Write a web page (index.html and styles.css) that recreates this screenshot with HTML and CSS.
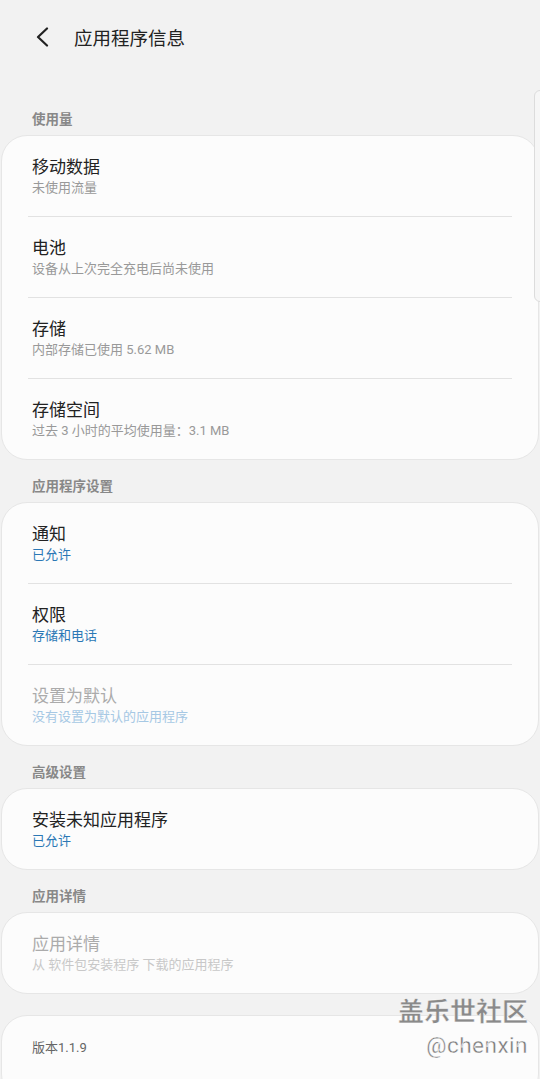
FILE: index.html
```html
<!DOCTYPE html>
<html lang="zh-CN">
<head>
  <meta charset="UTF-8">
  <meta name="viewport" content="width=device-width, initial-scale=1.0">
  <title>应用程序信息</title>
  <link rel="stylesheet" href="styles.css">
</head>
<body>
  <div class="header">
    <svg class="back" width="14" height="20" viewBox="0 0 14 20">
      <path d="M12 1.5 L3 10 L12 18.5" fill="none" stroke="#222" stroke-width="2.2" stroke-linecap="round" stroke-linejoin="round"/>
    </svg>
    <span class="title">应用程序信息</span>
  </div>

  <div class="scrollbar"></div>

  <div class="label first">使用量</div>
  <div class="card">
    <div class="item">
      <div class="name">移动数据</div>
      <div class="sub">未使用流量</div>
    </div>
    <div class="item">
      <div class="name">电池</div>
      <div class="sub">设备从上次完全充电后尚未使用</div>
    </div>
    <div class="item">
      <div class="name">存储</div>
      <div class="sub">内部存储已使用 5.62 MB</div>
    </div>
    <div class="item">
      <div class="name">存储空间</div>
      <div class="sub">过去 3 小时的平均使用量：3.1 MB</div>
    </div>
  </div>

  <div class="label">应用程序设置</div>
  <div class="card">
    <div class="item">
      <div class="name">通知</div>
      <div class="sub blue">已允许</div>
    </div>
    <div class="item">
      <div class="name">权限</div>
      <div class="sub blue">存储和电话</div>
    </div>
    <div class="item off">
      <div class="name">设置为默认</div>
      <div class="sub blue">没有设置为默认的应用程序</div>
    </div>
  </div>

  <div class="label">高级设置</div>
  <div class="card">
    <div class="item">
      <div class="name">安装未知应用程序</div>
      <div class="sub blue">已允许</div>
    </div>
  </div>

  <div class="label">应用详情</div>
  <div class="card">
    <div class="item off">
      <div class="name">应用详情</div>
      <div class="sub">从 软件包安装程序 下载的应用程序</div>
    </div>
  </div>

  <div class="card version">版本1.1.9</div>

  <div class="watermark">
    <div class="wm-big">盖乐世社区</div>
    <div class="wm-small">@chenxin</div>
  </div>
</body>
</html>
```

FILE: styles.css
```css
body {
  margin: 0;
  background: #f2f2f2;
  font-family: 'Roboto', 'Noto Sans CJK SC', sans-serif;
  color: #222;
  height: 1079px;
  overflow: hidden;
  position: relative;
}
.header {
  display: flex;
  align-items: center;
  height: 74px;
  padding-left: 35px;
}
.back {
  display: block;
  margin-right: 25px;
}
.title {
  font-size: 18.5px;
  color: #222;
}
.scrollbar {
  position: absolute;
  top: 90px;
  right: -6px;
  width: 10px;
  height: 210px;
  border: 1px solid #dcdcdc;
  border-radius: 6px;
  background: #f6f6f6;
}
.label {
  font-size: 13.5px;
  line-height: 20px;
  font-weight: bold;
  color: #888;
  padding-left: 32px;
  margin: 16px 0 6px;
}
.label.first {
  margin-top: 35px;
  margin-bottom: 6px;
}
.card {
  background: #fcfcfc;
  margin: 0 1px;
  border: 1px solid #e6e6e6;
  border-radius: 26px;
  padding: 0 26px;
}
.item {
  padding: 19px 4px;
  border-bottom: 1px solid #e2e2e2;
}
.item:last-child {
  border-bottom: none;
}
.name {
  font-size: 17px;
  line-height: 24px;
  color: #222;
}
.sub {
  font-size: 13px;
  line-height: 18px;
  color: #999;
}
.sub.blue {
  color: #2b78b5;
}
.off .name {
  color: #ababab;
}
.off .sub {
  color: #c8c8c8;
}
.off .sub.blue {
  color: #a6c8e4;
}
.version {
  margin-top: 21px;
  padding: 21px 30px 40px;
  font-size: 13px;
  line-height: 22px;
  color: #666;
}
.watermark {
  position: absolute;
  right: 12px;
  top: 992px;
  text-align: right;
  color: #8a8a8a;
  -webkit-text-stroke: 0.4px #fff;
}
.wm-big {
  font-family: 'Noto Sans CJK SC', sans-serif;
  font-size: 26px;
  line-height: 36px;
  font-weight: bold;
}
.wm-small {
  font-size: 22.5px;
  line-height: 34px;
  color: #777;
  letter-spacing: 0.5px;
}
```
